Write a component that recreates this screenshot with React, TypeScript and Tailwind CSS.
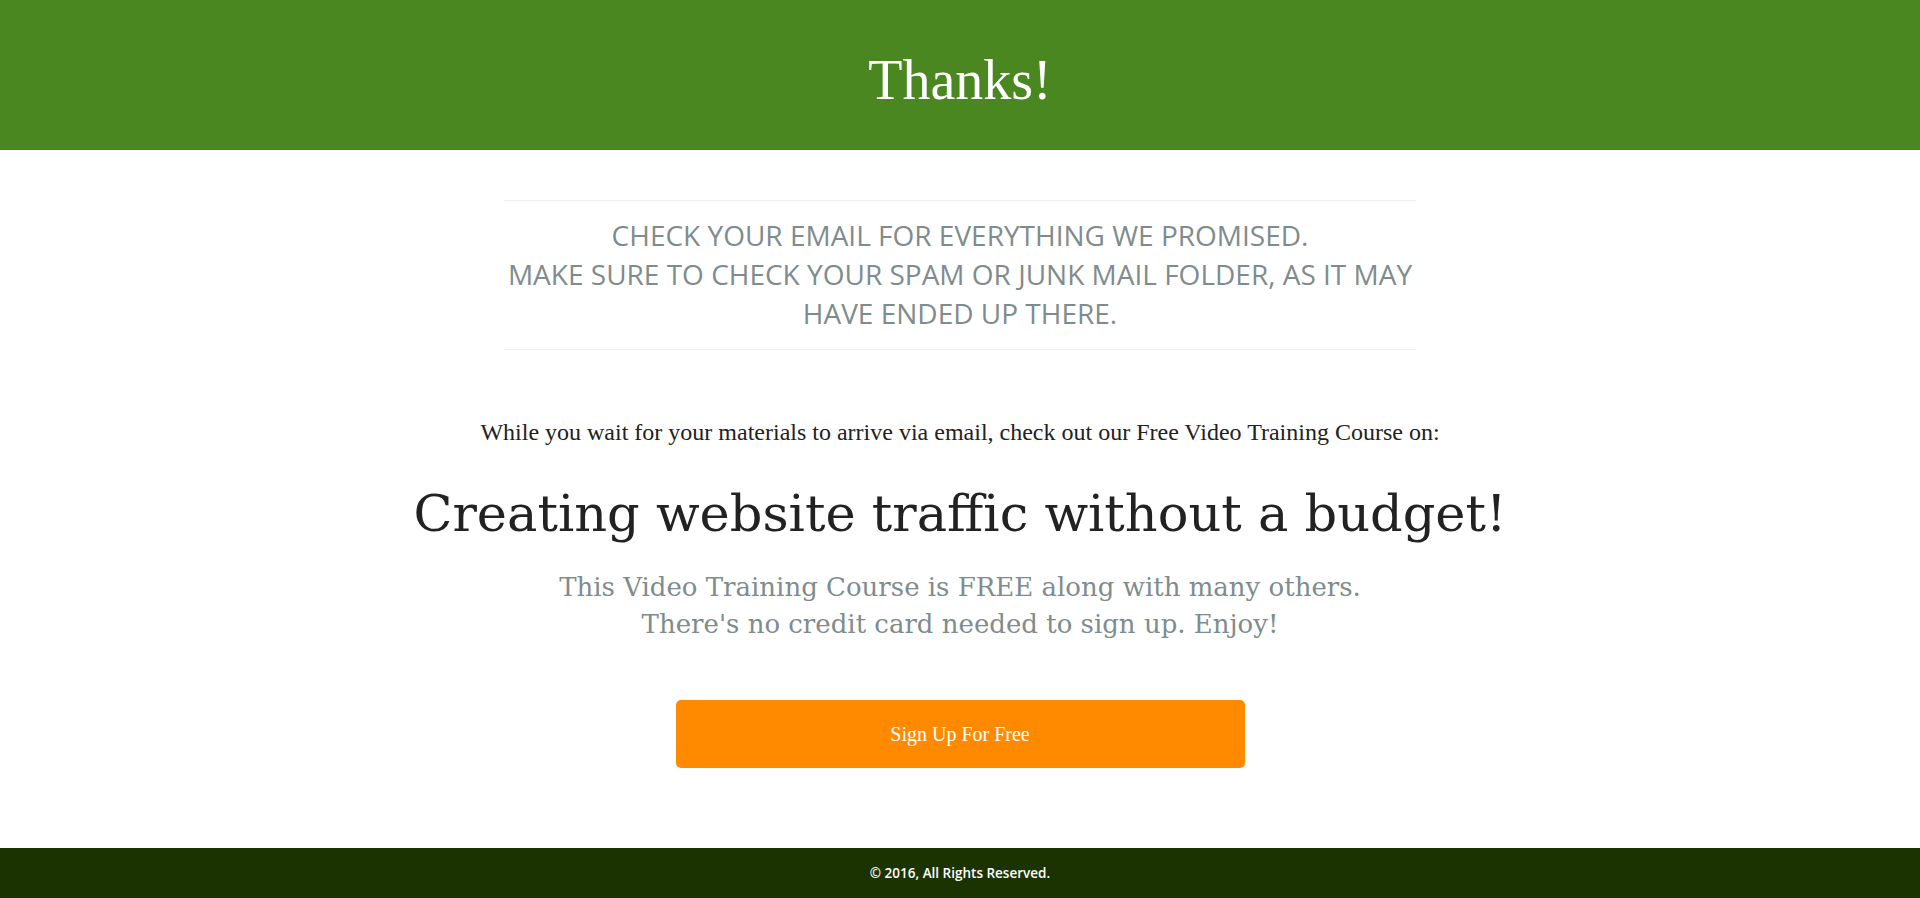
export default function App() {
  return (
    <div className="min-h-screen flex flex-col bg-white">
      {/* Header */}
      <header className="h-[150px] flex items-center justify-center bg-[#4a8720]">
        <h1 className="text-[56px] leading-none text-white font-['Liberation_Serif',serif] pt-[10px]">Thanks!</h1>
      </header>

      {/* Body */}
      <main className="flex-1 flex flex-col items-center">
        <div className="w-[912px] mt-[50px] border-t border-b border-[#eeeeee] pt-[15px] pb-[16px]">
          <p className="text-center uppercase text-[28px] leading-[39px] text-[#7f8c8d] font-['Open_Sans',sans-serif] whitespace-nowrap">
            Check your email for everything we promised.
            <br />
            Make sure to check your spam or junk mail folder, as it may
            <br />
            have ended up there.
          </p>
        </div>

        <p className="mt-[67px] text-[24px] leading-[30px] text-[#222] font-['Liberation_Serif',serif]">
          While you wait for your materials to arrive via email, check out our Free Video Training Course on:
        </p>

        <h2 className="mt-[37px] text-[51px] leading-[60px] text-[#222] font-['DejaVu_Serif',serif]">
          Creating website traffic without a budget!
        </h2>

        <p className="mt-[25px] text-center text-[26px] leading-[37px] text-[#7f8c8d] font-['DejaVu_Serif',serif]">
          This Video Training Course is FREE along with many others.
          <br />
          There's no credit card needed to sign up. Enjoy!
        </p>

        <button className="mt-[57px] w-[569px] h-[68px] rounded-[5px] bg-[#ff8a00] text-white text-[20px] font-['Liberation_Serif',serif]">
          Sign Up For Free
        </button>
      </main>

      {/* Footer */}
      <footer className="h-[50px] flex items-center justify-center bg-[#1b3300]">
        <span className="text-[13.5px] font-semibold text-white font-['Open_Sans',sans-serif]">© 2016, All Rights Reserved.</span>
      </footer>
    </div>
  );
}
